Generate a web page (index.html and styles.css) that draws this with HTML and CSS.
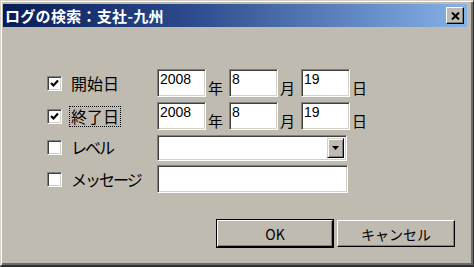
FILE: index.html
```html
<!DOCTYPE html>
<html lang="ja">
<head>
  <meta charset="UTF-8" />
  <title>ログの検索</title>
  <link rel="stylesheet" href="styles.css">
</head>
<body>
  <div class="window">
    <div class="titlebar">
      <span class="title">ログの検索：支社-九州</span>
      <span class="close">
        <svg width="9" height="8" viewBox="0 0 9 8"><path d="M1 0.5 L8 7.5 M8 0.5 L1 7.5" stroke="#000" stroke-width="2"/></svg>
      </span>
    </div>

    <div class="content">
      <div class="rows">
        <div class="row">
          <div class="opt">
            <span class="check"><svg width="11" height="11" viewBox="0 0 11 11"><polyline points="2,5 4.5,7.5 9,2.5" fill="none" stroke="#000" stroke-width="2.2"/></svg></span>
            <span class="lbl">開始日</span>
          </div>
          <div class="fields">
            <input class="field date" type="text" value="2008"><span class="unit">年</span>
            <input class="field date" type="text" value="8"><span class="unit">月</span>
            <input class="field date" type="text" value="19"><span class="unit">日</span>
          </div>
        </div>

        <div class="row">
          <div class="opt">
            <span class="check"><svg width="11" height="11" viewBox="0 0 11 11"><polyline points="2,5 4.5,7.5 9,2.5" fill="none" stroke="#000" stroke-width="2.2"/></svg></span>
            <span class="lbl focus">終了日</span>
          </div>
          <div class="fields">
            <input class="field date" type="text" value="2008"><span class="unit">年</span>
            <input class="field date" type="text" value="8"><span class="unit">月</span>
            <input class="field date" type="text" value="19"><span class="unit">日</span>
          </div>
        </div>

        <div class="row row-select">
          <div class="opt">
            <span class="check"></span>
            <span class="lbl kana">レベル</span>
          </div>
          <div class="select">
            <span class="select-btn"><svg width="7" height="4" viewBox="0 0 7 4"><polygon points="0,0 7,0 3.5,4" fill="#000"/></svg></span>
          </div>
        </div>

        <div class="row">
          <div class="opt">
            <span class="check"></span>
            <span class="lbl kana">メッセージ</span>
          </div>
          <input class="field wide" type="text" value="">
        </div>
      </div>

      <div class="actions">
        <button class="btn default">OK</button>
        <button class="btn">キャンセル</button>
      </div>
    </div>
  </div>
</body>
</html>
```

FILE: styles.css
```css
body {
  margin: 0;
  background: #c0bbb0;
  font-family: "Noto Sans CJK JP", "Liberation Sans", sans-serif;
  color: #000;
}
.window {
  width: 474px;
  height: 267px;
  box-sizing: border-box;
  border-top: 1px solid #d4d0c8;
  border-left: 1px solid #d4d0c8;
  border-right: 1px solid #303030;
  border-bottom: 2px solid #303030;
  box-shadow: inset 1px 1px #fff, inset -2px -2px #6e6c66;
  padding: 3px 6px 0 2px;
  background: #c0bbb0;
}
.titlebar {
  height: 23px;
  display: flex;
  align-items: center;
  justify-content: space-between;
  padding: 0 3px 0 2px;
  background: linear-gradient(90deg, #081d58 0%, #2c4a8c 40%, #86b2e8 100%);
}
.title {
  color: #fff;
  font-size: 15px;
  font-weight: bold;
  line-height: 23px;
  letter-spacing: 0.3px;
}
.close {
  width: 18px;
  height: 17px;
  box-sizing: border-box;
  display: flex;
  align-items: center;
  justify-content: center;
  background: #c0bbb0;
  border-top: 1px solid #fff;
  border-left: 1px solid #fff;
  border-right: 1px solid #000;
  border-bottom: 1px solid #000;
  box-shadow: inset -1px -1px #808080;
}
.content {
  padding: 42px 12px 0 44px;
}
.rows {
  display: flex;
  flex-direction: column;
  gap: 5px;
}
.row {
  height: 28px;
  display: flex;
  align-items: center;
}
.row-select {
  height: 25px;
  align-items: flex-start;
}
.opt {
  width: 110px;
  display: flex;
  align-items: center;
  align-self: center;
}
.check {
  width: 15px;
  height: 15px;
  box-sizing: border-box;
  display: flex;
  align-items: center;
  justify-content: center;
  background: #fff;
  border-top: 1px solid #808080;
  border-left: 1px solid #808080;
  border-right: 1px solid #fff;
  border-bottom: 1px solid #fff;
  box-shadow: inset 1px 1px #404040, inset -1px -1px #d4d0c8;
}
.lbl {
  margin-left: 9px;
  font-size: 16px;
  line-height: 19px;
}
.lbl.kana {
  letter-spacing: -2px;
}
.lbl.focus {
  margin-left: 7px;
  padding: 0 1px;
  border: 1px dotted #000;
}
.fields {
  display: flex;
  height: 28px;
}
.field {
  box-sizing: border-box;
  height: 28px;
  margin: 0;
  padding: 1px 2px;
  font-family: "Liberation Sans", sans-serif;
  font-size: 14px;
  line-height: 16px;
  color: #000;
  background: #fff;
  border-top: 1px solid #808080;
  border-left: 1px solid #808080;
  border-right: 1px solid #fff;
  border-bottom: 1px solid #fff;
  box-shadow: inset 1px 1px #404040, inset -1px -1px #d4d0c8;
  outline: none;
  vertical-align: top;
}
.field.date {
  width: 49px;
  padding-top: 0;
  padding-bottom: 8px;
}
.field.wide {
  width: 191px;
}
.unit {
  width: 14px;
  margin: 0 7px 0 2px;
  align-self: flex-end;
  font-size: 15px;
  line-height: 18px;
}
.select {
  width: 190px;
  height: 26px;
  box-sizing: border-box;
  display: flex;
  justify-content: flex-end;
  padding: 2px;
  background: #fff;
  border-top: 1px solid #808080;
  border-left: 1px solid #808080;
  border-right: 1px solid #fff;
  border-bottom: 1px solid #fff;
  box-shadow: inset 1px 1px #404040, inset -1px -1px #d4d0c8;
}
.select-btn {
  width: 17px;
  height: 20px;
  box-sizing: border-box;
  display: flex;
  align-items: center;
  justify-content: center;
  background: #c0bbb0;
  border-top: 1px solid #d4d0c8;
  border-left: 1px solid #d4d0c8;
  border-right: 1px solid #000;
  border-bottom: 1px solid #000;
  box-shadow: inset 1px 1px #fff, inset -1px -1px #808080;
}
.actions {
  display: flex;
  justify-content: flex-end;
  gap: 4px;
  margin-top: 27px;
}
.btn {
  width: 118px;
  height: 27px;
  box-sizing: border-box;
  padding: 0;
  font-family: "Noto Sans CJK JP", "Liberation Sans", sans-serif;
  font-size: 14px;
  color: #000;
  background: #c0bbb0;
  border-top: 1px solid #fff;
  border-left: 1px solid #fff;
  border-right: 1px solid #000;
  border-bottom: 1px solid #000;
  box-shadow: inset -1px -1px #808080;
}
.btn.default {
  width: 116px;
  outline: 1px solid #000;
}
```
